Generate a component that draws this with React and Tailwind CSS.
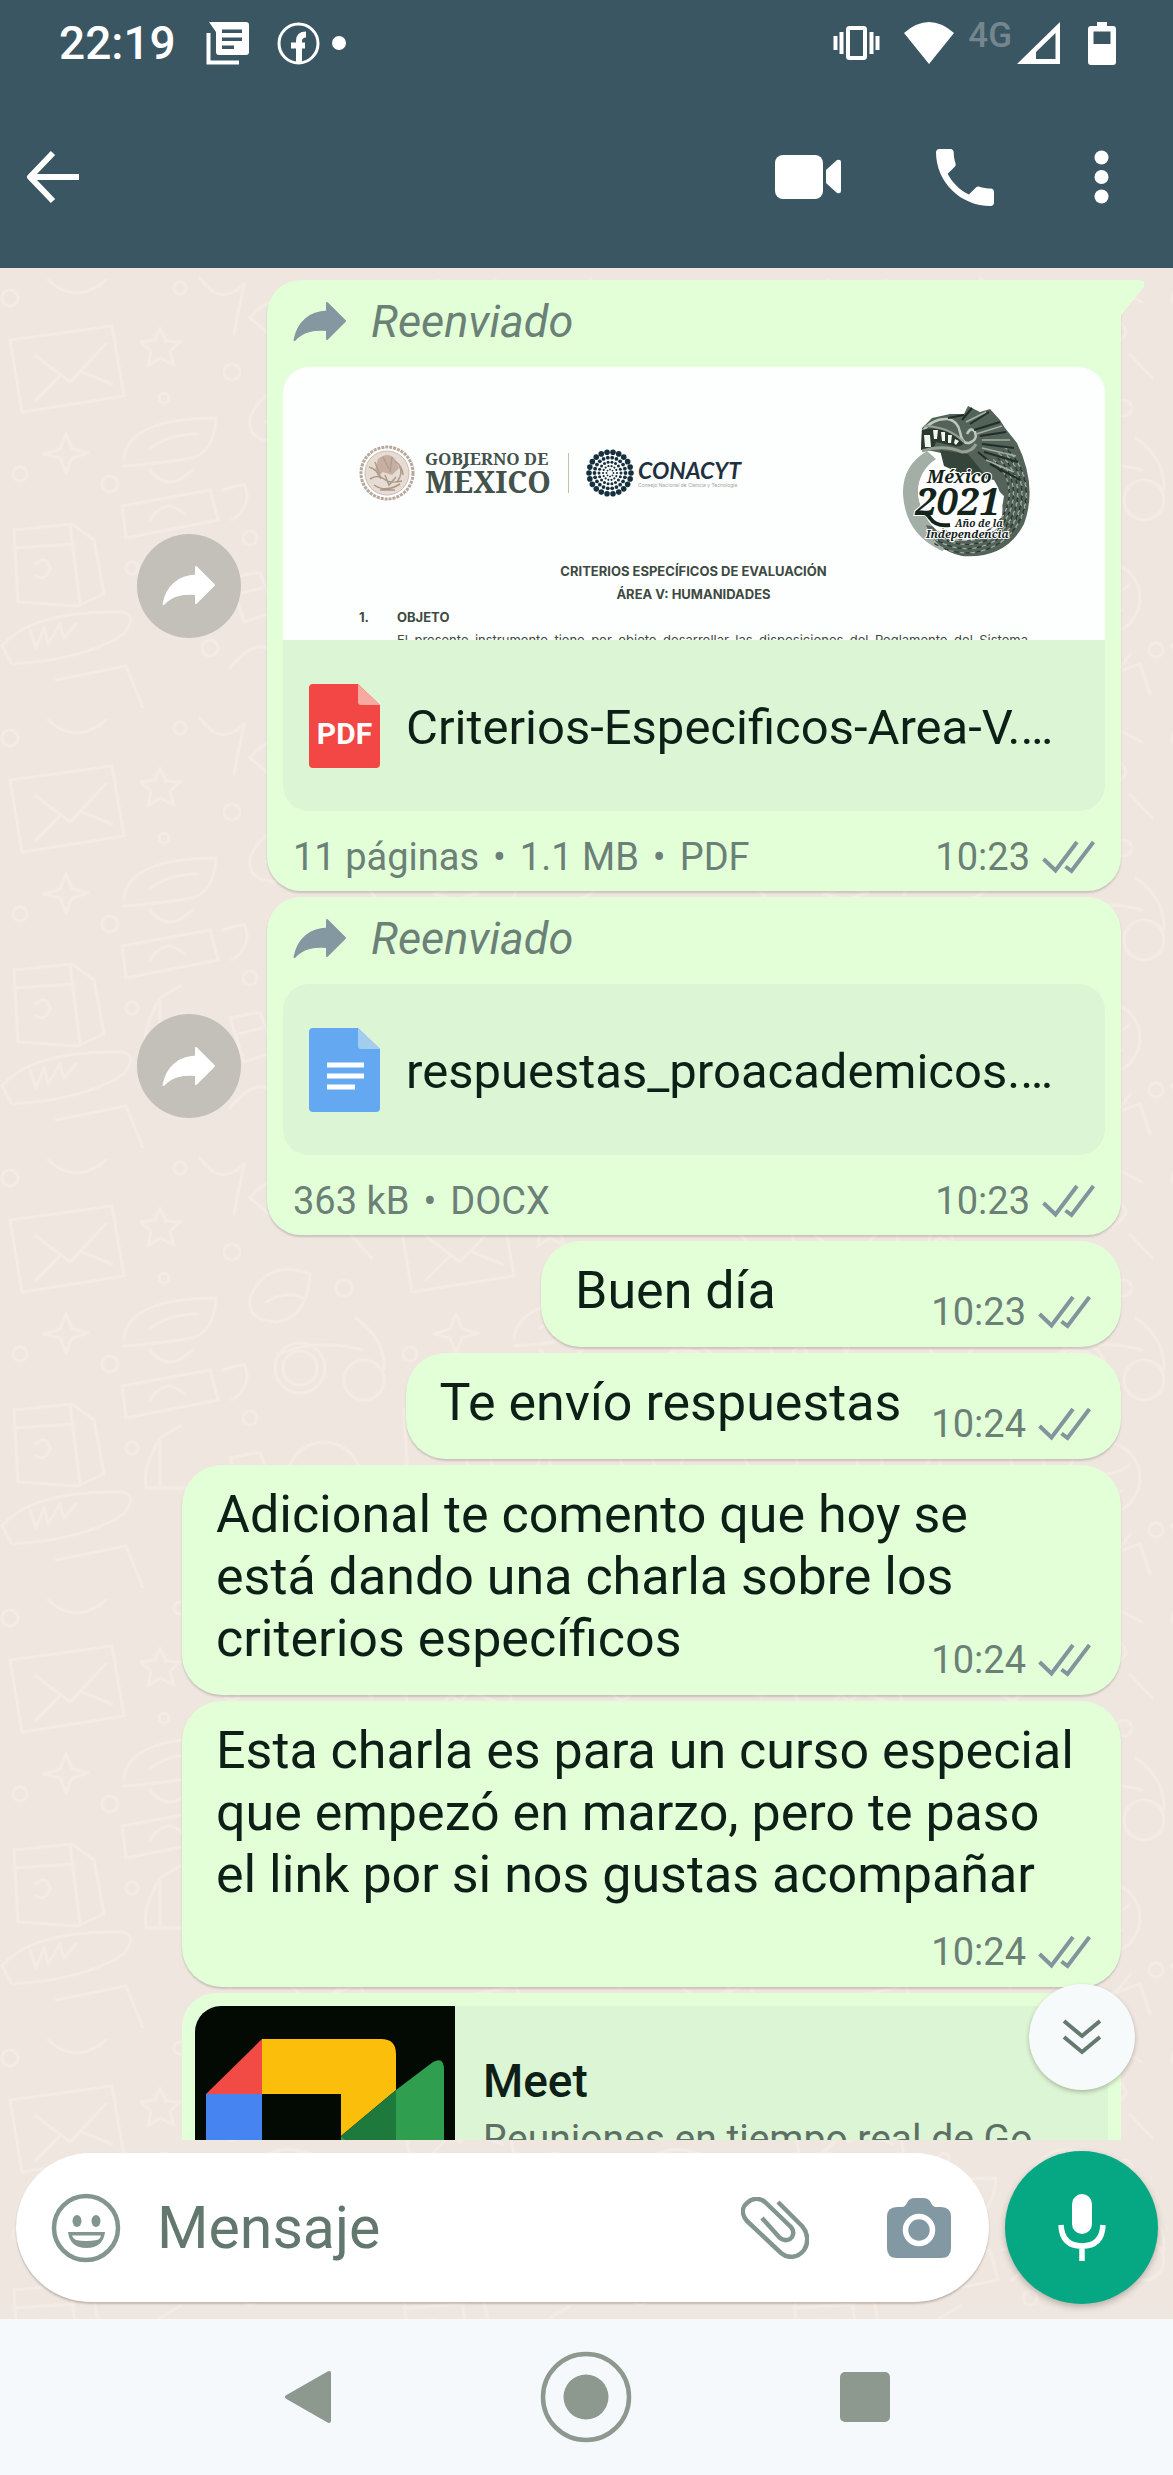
import React from 'react';

const messages = [
  { id: 1, type: 'file', kind: 'pdf', name: 'Criterios-Especificos-Area-V.…', info: ['11 páginas', '1.1 MB', 'PDF'], time: '10:23', preview: true, tail: true },
  { id: 2, type: 'file', kind: 'docx', name: 'respuestas_proacademicos.…', info: ['363 kB', 'DOCX'], time: '10:23' },
  { id: 3, type: 'text', text: 'Buen día', time: '10:23', width: 'min-w-[580px]' },
  { id: 4, type: 'text', text: 'Te envío respuestas', time: '10:24' },
  { id: 5, type: 'text', text: 'Adicional te comento que hoy se\nestá dando una charla sobre los\ncriterios específicos', time: '10:24', width: 'w-[939px]' },
  { id: 6, type: 'text', text: 'Esta charla es para un curso especial\nque empezó en marzo, pero te paso\nel link por si nos gustas acompañar', time: '10:24', width: 'w-[939px]', stacked: true },
];

function ForwardArrow({ className }) {
  return (
    <svg className={className} viewBox="0 0 54 41" fill="currentColor" stroke="currentColor" strokeWidth="2" strokeLinejoin="round" aria-hidden="true">
      <path d="M34 2 52 20 34 38V29C20 28 10 30 1.500 39 5 21 17 11 34 10.500z" />
    </svg>
  );
}

function Ticks() {
  return (
    <svg className="h-[34px] w-[53px] text-[#82959c]" viewBox="0 0 53 34" fill="none" stroke="currentColor" strokeWidth="4" aria-label="Entregado">
      <path d="M1.500 19 13.500 30.500 35 2M23.500 26.500 29.500 31 51.500 2" />
    </svg>
  );
}

function Meta({ time }) {
  return (
    <span className="flex items-center gap-3 text-[38px] leading-[44px] text-[#6b8077]">
      <time>{time}</time>
      <Ticks />
    </span>
  );
}

function StatusBar() {
  return (
    <div className="flex h-[86px] items-center pl-[59px] pr-[57px]">
      <span className="text-[46px] font-medium leading-none">22:19</span>
      <svg className="ml-[30px] h-[43px] w-[43px]" viewBox="0 0 43 43" aria-hidden="true">
        <path d="M2.500 11V40.500H33" fill="none" stroke="currentColor" strokeWidth="4" />
        <path fill="currentColor" fillRule="evenodd" d="M3 0H40Q43 0 43 3V30Q43 33 40 33H13Q10 33 10 30V10zM16 7.500V11H36V7.500zM16 15.500V19H36V15.500zM16 23.500V27H28V23.500z" />
      </svg>
      <svg className="ml-7 h-[43px] w-[43px]" viewBox="0 0 43 43" fill="none" stroke="currentColor" aria-hidden="true">
        <circle cx="21.500" cy="21.500" r="19.500" strokeWidth="3" />
        <path d="M22 41V19Q22 12.500 29 12.500M14 23.500H28" strokeWidth="6" />
      </svg>
      <span className="ml-3 h-[14px] w-[14px] rounded-full bg-white" />

      <svg className="ml-auto h-[34px] w-[47px]" viewBox="0 0 47 34" fill="none" stroke="currentColor" aria-hidden="true">
        <rect x="15" y="2" width="17" height="30" rx="1.500" strokeWidth="4" />
        <path d="M2.500 10V24M8.500 6V28M38.500 6V28M44.500 10V24" strokeWidth="4" />
      </svg>
      <svg className="ml-6 h-[42px] w-[50px]" viewBox="0 0 50 42" fill="currentColor" aria-hidden="true">
        <path d="M0 11Q25-11 50 11L25 42z" />
      </svg>
      <span className="-mt-4 ml-[14px] text-[35px] font-medium leading-none text-[#74878f]">4G</span>
      <svg className="ml-[5px] h-[42px] w-[43px]" viewBox="0 0 43 42" fill="currentColor" fillRule="evenodd" aria-hidden="true">
        <path d="M43 0V42H0zM38.500 11 19 30V37H38.500z" />
      </svg>
      <svg className="ml-7 h-[43px] w-[28px]" viewBox="0 0 28 43" fill="currentColor" fillRule="evenodd" aria-hidden="true">
        <path d="M9 0H19V4H25Q28 4 28 7V40Q28 43 25 43H3Q0 43 0 40V7Q0 4 3 4H9zM5.500 9.500V22H22.500V9.500z" />
      </svg>
    </div>
  );
}

function Header() {
  return (
    <header className="shrink-0 bg-[#3a5663] text-white">
      <StatusBar />
      <div className="flex h-[182px] items-center pl-[26px] pr-16">
        <button type="button" aria-label="Atrás">
          <svg className="block h-[54px] w-[54px]" viewBox="0 0 54 54" fill="none" stroke="currentColor" strokeWidth="6" strokeLinejoin="round">
            <path d="M27 3 4 27 27 51M4 27H53" />
          </svg>
        </button>
        <button type="button" aria-label="Videollamada" className="ml-auto">
          <svg className="block h-[44px] w-[67px]" viewBox="0 0 67 44" fill="currentColor">
            <rect width="48" height="44" rx="8" />
            <path d="M51 15 62 5Q66 4 66 7V36Q66 39 62 38L51 28z" />
          </svg>
        </button>
        <button type="button" aria-label="Llamar" className="ml-[94px]">
          <svg className="block h-[57px] w-[58px]" viewBox="3 3 18 18" preserveAspectRatio="none" fill="currentColor">
            <path d="M20 15.500c-1.250 0-2.450-.2-3.570-.57-.35-.12-.75-.03-1.020.24l-2.200 2.200c-2.830-1.440-5.150-3.750-6.590-6.590l2.200-2.200c.28-.28.36-.67.250-1.020C8.700 6.450 8.500 5.250 8.500 4c0-.55-.45-1-1-1H4c-.55 0-1 .45-1 1 0 9.390 7.610 17 17 17 .55 0 1-.45 1-1v-3.500c0-.55-.45-1-1-1z" />
          </svg>
        </button>
        <button type="button" aria-label="Más opciones" className="ml-[100px]">
          <svg className="block h-[54px] w-[15px]" viewBox="0 0 15 54" fill="currentColor">
            <circle cx="7.500" cy="7.500" r="7" />
            <circle cx="7.500" cy="27" r="7" />
            <circle cx="7.500" cy="46.500" r="7" />
          </svg>
        </button>
      </div>
    </header>
  );
}

// Tapiz con dibujitos tenues detrás de la conversación
function Wallpaper() {
  return (
    <svg className="absolute inset-0 h-full w-full" aria-hidden="true">
      <defs>
        <pattern id="doodles" width="390" height="440" patternUnits="userSpaceOnUse">
          <g fill="none" stroke="#f4ebe5" strokeWidth="3" strokeLinejoin="round" strokeLinecap="round">
            <path d="M10 72 112 58 124 128 22 144zM36 88l34 26 36-38M36 132l24-24M112 116 82 104" />
            <path d="M160 60l6 13 14 1-10 9 4 14-14-7-12 8 3-15-10-9 14-2z" />
            <path d="M124 190q6-40 92-40-2 34-24 40-36 6-68 8M150 180q20-14 48-14M150 202q18 24 42 0" />
            <path d="M250 150q16-40 60-24-2 44-34 48-30-2-26-24zM266 154q20-12 38-4" />
            <circle cx="300" cy="220" r="25" />
            <circle cx="300" cy="220" r="17" />
            <circle cx="364" cy="232" r="20" />
            <path d="M278 206q40-16 84-4M384 222q2-30-28-52" />
            <path d="M14 262l58-6 22 16 10 54-26 12-60-4zM70 256l10 80M14 280l60-4M36 296q10-10 14 4-4 14-14 8" />
            <path d="M122 238l88-16 8 30-92 18zM222 222l22-6q10 20-12 36M150 252q16-24 34-6" />
            <path d="M160 290v50h-14q-4-20 14-50l20-12M160 340h34" />
            <path d="M2 378q30-36 120-34 16 2 2 22-40 26-112 30zM30 362l6 18 8-20 4 16 12-20 4 14 12-14" />
            <path d="M56 412l70-14 18 44M230 310l30-6 14 40-30 10zM238 326l24-6" />
            <circle cx="324" cy="330" r="36" />
            <path d="M300 318q24 16 48 0M308 344q16 14 34-2" />
            <path d="M250 50q24-30 60-14t36 30q-20 26-56 18zM336 20l26 14M350 86l22 24" />
            <path d="M48 12q28 26 58 0M200 10q20 30 44 6l-10 50" />
            <path d="M230 400q30-40 60-4t60-10M320 410l40-14 10 30" />
            <path d="M66 166l6 15 16 4-16 5-6 15-6-15-16-4 16-5z" />
            <circle cx="20" cy="206" r="7" />
            <circle cx="110" cy="216" r="8" />
            <circle cx="232" cy="104" r="8" />
            <circle cx="164" cy="130" r="5" />
            <circle cx="344" cy="140" r="8" />
            <circle cx="250" cy="270" r="7" />
            <circle cx="132" cy="300" r="6" />
            <circle cx="210" cy="380" r="8" />
            <circle cx="180" cy="20" r="6" />
            <circle cx="376" cy="382" r="7" />
            <circle cx="10" cy="30" r="8" />
          </g>
        </pattern>
      </defs>
      <rect width="100%" height="100%" fill="url(#doodles)" />
    </svg>
  );
}

function ConacytDots() {
  const rings = [
    { r: 21, n: 22, size: 2.8 },
    { r: 15.5, n: 22, size: 1.9 },
    { r: 11, n: 18, size: 1.5 },
    { r: 7, n: 14, size: 1.1 },
    { r: 3.5, n: 8, size: 0.9 },
  ];
  return (
    <svg className="h-12 w-12" viewBox="-24 -24 48 48" fill="#17303f" aria-hidden="true">
      {rings.map((ring) =>
        Array.from({ length: ring.n }, (_, i) => {
          const a = (i / ring.n) * Math.PI * 2;
          return <circle key={`${ring.r}-${i}`} cx={Math.cos(a) * ring.r} cy={Math.sin(a) * ring.r} r={ring.size} />;
        })
      )}
    </svg>
  );
}

function EagleSeal() {
  return (
    <svg className="h-14 w-14" viewBox="0 0 56 56" fill="none" aria-hidden="true">
      <circle cx="28" cy="28" r="26" stroke="#b9a79b" strokeWidth="3" strokeDasharray="3 1" />
      <circle cx="28" cy="28" r="22" fill="#e6dcd3" stroke="#cbbdb1" />
      <path d="M19 14q10-8 17 0l4 9-7 7-9-3-5 4-3-6z" fill="#c6aea1" />
      <path d="M10 22q8 2 12 12M16 17l5 14M36 16q8 6 8 14M40 20q5 8-2 17M24 12l6 12M33 12l-2 15" stroke="#b39b8c" strokeWidth="1.500" />
      <path d="M11 34q8-5 14 0t18 2M15 40q12 8 26-1M21 45h15M26 30l4 10 7-8" stroke="#aa9888" strokeWidth="1.500" />
    </svg>
  );
}

function SerpentSeal() {
  // plumas del cuerpo, repartidas a lo largo del aro
  const feathers = [];
  for (let ring = 0; ring < 5; ring++) {
    for (let i = 0; i < 34; i++) {
      const a = -0.9 + i * 0.09 + (ring % 2) * 0.05;
      const r = 43 + ring * 4.2;
      feathers.push({ x: 65 + Math.cos(a) * r, y: 87 + Math.sin(a) * r, a, light: (i + ring) % 2 === 0, key: `${ring}-${i}` });
    }
  }
  return (
    <svg className="h-[154px] w-[130px]" viewBox="0 0 130 154" aria-label="México 2021, Año de la Independencia">
      <path d="M25 45Q0 60 1 88 3 128 40 145L52 136Q17 114 16 86 17 64 34 53z" fill="#a3aea6" />
      <path d="M30 45 62 52 102 90Q99 124 60 127L24 119Q34 145 60 150 104 153 122 118 136 80 115 37L103 22 98 14 88 3 78 6 66 0 62 8 48 8 30 12 20 22 19 44z" fill="#53635a" />
      <path d="M36 52Q15 66 16 88 20 118 48 134 86 138 97 122 106 96 92 74L62 70z" fill="#fff" />
      {feathers.map((f) => (
        <path
          key={f.key}
          d={`M${f.x} ${f.y}q${-Math.sin(f.a) * 2 - 2} ${Math.cos(f.a) * 2} ${-Math.sin(f.a) * 4} ${Math.cos(f.a) * 5}`}
          fill="none"
          stroke={f.light ? '#a2ada4' : '#26352d'}
          strokeWidth="1.200"
        />
      ))}
      <path d="M38 44 66 48 84 70 60 68 42 60z" fill="#35453c" />
      <path d="M20 26Q30 12 46 13 56 15 58 26 60 38 67 37 76 34 73 26 69 20 65 28" fill="none" stroke="#bfc8be" strokeWidth="2.500" />
      <path d="M20 24Q42 18 62 37 58 42 52 40L34 36 31 44 19 44z" fill="#2a3930" />
      <path d="M22 29h6l1 12h-6zM31 24h5l-1 9h-3zM39 26h4v9h-3zM46 29h4l-1 8h-3zM53 33l4 2-3 4-2-2z" fill="#f4f6f0" />
      <path d="M20 45Q42 38 60 46 70 46 74 38" fill="none" stroke="#98a094" strokeWidth="3" />
      <path d="M22 20Q32 20 44 24 54 28 62 36" fill="none" stroke="#98a094" strokeWidth="2" />
      <path d="M46 12l16-3M60 14l10-12M68 18 87 6M72 24 98 16M78 30 104 26M80 38 112 42M82 46 116 56M76 46 100 66M88 58 118 74" fill="none" stroke="#202e27" strokeWidth="2" />
      <path d="M64 16 84 6M74 28 100 20M80 34 108 34M80 42 114 50M84 54 112 66" fill="none" stroke="#a4aea4" strokeWidth="1.500" />
      <g fontFamily="'Noto Serif', 'Liberation Serif', serif" fontStyle="italic" fontWeight="700" fill="#12241b" stroke="#fff" strokeWidth="2" paintOrder="stroke">
        <text x="25" y="77" fontSize="18">México</text>
        <text x="13" y="109" fontSize="38">2021</text>
        <text x="53" y="121" fontSize="10">Año de la</text>
        <text x="24" y="132" fontSize="11">Independencia</text>
      </g>
      <path d="M16 107Q24 105 28 112 34 121 48 119" fill="none" stroke="#12241b" strokeWidth="4" />
    </svg>
  );
}

function DocumentPreview() {
  return (
    <div className="h-[273px] overflow-hidden bg-[#fdfffe] pl-[76px] pr-[77px] pt-[39px] font-[Inter,sans-serif] text-[13px] font-bold leading-[23px] text-[#3d4a42]">
      <div className="-mr-1 flex items-start justify-between">
        <div className="flex items-center pt-[39px]">
          <EagleSeal />
          <div className="ml-[10px] w-[126px] whitespace-nowrap font-['Noto_Serif','Liberation_Serif',serif] text-[#43524a]">
            <p className="text-[17px] leading-[18px]">GOBIERNO DE</p>
            <p className="text-[30px] leading-[28px]">MÉXICO</p>
          </div>
          <span className="mx-[17px] h-10 w-px bg-[#c9bfae]" />
          <ConacytDots />
          <div className="ml-1">
            <p className="font-[Lato,sans-serif] text-[23px] italic leading-[24px] text-[#1f3140]">CONACYT</p>
            <p className="text-[5px] font-normal leading-[6px] text-[#9aa29d]">Consejo Nacional de Ciencia y Tecnología</p>
          </div>
        </div>
        <SerpentSeal />
      </div>
      <p className="text-center">CRITERIOS ESPECÍFICOS DE EVALUACIÓN</p>
      <p className="text-center">ÁREA V: HUMANIDADES</p>
      <div className="flex">
        <span className="w-[38px]">1.</span>
        <div className="flex-1">
          <p>OBJETO</p>
          <p className="whitespace-nowrap text-justify font-normal [text-align-last:justify]">
            El presente instrumento tiene por objeto desarrollar las disposiciones del Reglamento del Sistema
          </p>
        </div>
      </div>
    </div>
  );
}

function FileIcon({ kind }) {
  const isPdf = kind === 'pdf';
  return (
    <svg className="h-[84px] w-[71px] shrink-0" viewBox="0 0 71 84" aria-hidden="true">
      <path d="M4 0H49L71 21V80Q71 84 67 84H4Q0 84 0 80V4Q0 0 4 0z" fill={isPdf ? '#f24744' : '#64a8f2'} />
      <path d="M49 0 71 21H52Q49 21 49 18z" fill={isPdf ? '#f6aaa0' : '#a3cdee'} />
      {isPdf ? (
        <text x="35.500" y="60" textAnchor="middle" fontFamily="Roboto, sans-serif" fontWeight="700" fontSize="30" fill="#fff">PDF</text>
      ) : (
        <path d="M18 37H55M18 48H55M18 59H46" stroke="#fff" strokeWidth="5" />
      )}
    </svg>
  );
}

function FileMessage({ message }) {
  return (
    <div className="flex items-center gap-[26px]">
      <button type="button" aria-label="Reenviar" className="flex h-[104px] w-[104px] items-center justify-center rounded-full bg-[#c3c0b9] text-white">
        <ForwardArrow className="h-[41px] w-[54px]" />
      </button>
      <article className="relative w-[854px] rounded-[34px] bg-[#e3ffd8] px-4 shadow-[0_2px_2px_rgba(60,50,40,0.2)]">
        {message.tail && (
          <svg className="absolute -right-6 top-0 h-9 w-[60px] text-[#e3ffd8]" viewBox="0 0 60 36" fill="currentColor" aria-hidden="true">
            <path d="M0 0H54Q62 1 58 8L36 35H0z" />
          </svg>
        )}
        <div className="relative flex h-[87px] items-center gap-6 pb-[5px] pl-[10px] text-[45px] italic leading-none text-[#6b8077]">
          <ForwardArrow className="h-[41px] w-[54px] text-[#8398a1]" />
          <span>Reenviado</span>
        </div>
        <div className="overflow-hidden rounded-[26px] bg-[#dcf5d4]">
          {message.preview && <DocumentPreview />}
          <a href="#archivo" className="flex h-[171px] items-center gap-[26px] px-[26px]">
            <FileIcon kind={message.kind} />
            <span className="whitespace-nowrap pt-1 text-[49px] leading-[60px] text-[#0d1f17]">{message.name}</span>
          </a>
        </div>
        <footer className="flex h-[80px] items-center justify-between px-[10px] pt-3">
          <span className="flex text-[38px] leading-[44px] text-[#6b8077]">
            {message.info.map((part, i) => (
              <span key={part}>
                {i > 0 && <span className="px-[14px]">•</span>}
                {part}
              </span>
            ))}
          </span>
          <Meta time={message.time} />
        </footer>
      </article>
    </div>
  );
}

function TextMessage({ message }) {
  return (
    <article className={`flow-root max-w-full rounded-[40px] bg-[#e3ffd8] pb-[13px] pl-[34px] pr-[30px] pt-[19px] shadow-[0_2px_2px_rgba(60,50,40,0.2)] ${message.width || ''}`}>
      <span className="whitespace-pre-line text-[52px] leading-[62px] text-[#0d1f17]">{message.text}</span>
      <span className={`float-right pl-[30px] ${message.stacked ? 'mt-6' : 'mt-[30px]'}`}>
        <Meta time={message.time} />
      </span>
    </article>
  );
}

function MeetLogo() {
  return (
    <svg className="h-[260px] w-[260px] shrink-0" viewBox="0 0 260 260" aria-hidden="true">
      <rect width="260" height="260" fill="#030a04" />
      <path d="M11 88 67 33V88z" fill="#f24b45" />
      <path d="M67 33H186Q201 33 201 48V84L146 130V88H67z" fill="#fbbf0b" />
      <path d="M11 88H67V228H26Q11 228 11 213z" fill="#4684f2" />
      <path d="M146 130 201 84V176z" fill="#1d7a3c" />
      <path d="M201 84 238 56Q249 50 249 64V196Q249 210 238 204L201 176z" fill="#2f9e4e" />
      <path d="M67 172H146V130L201 176V213Q201 228 186 228H67z" fill="#2f9e4e" />
    </svg>
  );
}

function LinkMessage() {
  return (
    <article className="w-[939px] max-w-full rounded-t-[34px] bg-[#e3ffd8] p-[13px]">
      <a href="#meet" className="flex overflow-hidden rounded-[26px] bg-[#dcf5d4]">
        <MeetLogo />
        <span className="flex flex-col gap-[6px] whitespace-nowrap pl-7 pt-[48px]">
          <strong className="text-[46px] font-medium leading-[54px] text-[#0d1f17]">Meet</strong>
          <span className="text-[39px] leading-[50px] text-[#5c7066]">Reuniones en tiempo real de Go…</span>
        </span>
      </a>
    </article>
  );
}

function Composer() {
  return (
    <form className="relative flex shrink-0 items-center gap-4 pb-[15px] pl-4 pr-[15px] pt-[11px]" onSubmit={(e) => e.preventDefault()}>
      <div className="flex h-[149px] min-w-0 flex-1 items-center rounded-full bg-white pl-[35px] pr-[38px] shadow-[0_2px_2px_rgba(60,50,40,0.25)]">
        <button type="button" aria-label="Emojis">
          <svg className="block h-[70px] w-[70px]" viewBox="0 0 70 70" fill="none">
            <circle cx="35" cy="35" r="32" stroke="#82968f" strokeWidth="4.500" />
            <ellipse cx="26" cy="28" rx="4.500" ry="6" fill="#82968f" />
            <ellipse cx="45" cy="28" rx="4.500" ry="6" fill="#82968f" />
            <path d="M17 39H54Q52 55 35.500 55 19 55 17 39z" fill="#82968f" />
            <path d="M21 42.500H50Q49 46.500 46 47 35 49 25 47 22 46 21 42.500z" fill="#fff" />
          </svg>
        </button>
        <input
          type="text"
          aria-label="Mensaje"
          placeholder="Mensaje"
          className="ml-9 min-w-0 flex-1 bg-transparent text-[59px] leading-[70px] text-[#0d1f17] outline-none placeholder:text-[#62776d]"
        />
        <button type="button" aria-label="Adjuntar">
          <svg className="block h-[62px] w-[68px]" viewBox="0 0 68 62" fill="none" stroke="#82968f" strokeWidth="4.500" strokeLinecap="butt" strokeLinejoin="round">
            <path d="M37 5 61 29C67 36 68 46 63 53 57 61 47 62 40 56L6 24C1 18 0 11 6 6 11 1 19 0 25 6L50 30C54 35 52 40 49 42 45 44 41 43 38 40L21 21" />
          </svg>
        </button>
        <button type="button" aria-label="Cámara" className="ml-[78px]">
          <svg className="block h-[60px] w-[64px]" viewBox="0 0 64 60">
            <path d="M10 9H15Q18 9 20 5 22 0 28 0H36Q42 0 44 5 46 9 49 9H54Q64 9 64 19V50Q64 60 54 60H10Q0 60 0 50V19Q0 9 10 9z" fill="#8299a3" />
            <circle cx="32" cy="32" r="13.500" fill="none" stroke="#fff" strokeWidth="5.500" />
          </svg>
        </button>
      </div>
      <button type="button" aria-label="Grabar nota de voz" className="flex h-[153px] w-[153px] items-center justify-center rounded-full bg-[#06a884] shadow-[0_3px_6px_rgba(60,50,40,0.3)]">
        <svg className="h-[67px] w-[48px]" viewBox="0 0 48 67" fill="none" stroke="#fff" strokeWidth="5.500">
          <rect x="14" y="0" width="20" height="40" rx="10" fill="#fff" stroke="none" />
          <path d="M3 31Q4 52 24 52 44 52 45 31M24 52V67" />
        </svg>
      </button>
    </form>
  );
}

function NavigationBar() {
  return (
    <nav className="flex h-[156px] shrink-0 items-center justify-center gap-[208px] bg-[#f5f9fb] text-[#8d988f]">
      <button type="button" aria-label="Volver">
        <svg className="block h-[54px] w-[48px]" viewBox="0 0 48 54" fill="currentColor" stroke="currentColor" strokeWidth="4" strokeLinejoin="round">
          <path d="M3 27 45 3V51z" />
        </svg>
      </button>
      <button type="button" aria-label="Inicio">
        <svg className="block h-[92px] w-[92px]" viewBox="0 0 92 92">
          <circle cx="46" cy="46" r="43" fill="none" stroke="currentColor" strokeWidth="4.500" />
          <circle cx="46" cy="46" r="22.500" fill="currentColor" />
        </svg>
      </button>
      <button type="button" aria-label="Recientes">
        <span className="block h-[50px] w-[50px] rounded-[5px] bg-[#8d988f]" />
      </button>
    </nav>
  );
}

export default function App() {
  return (
    <div className="flex h-screen flex-col overflow-hidden font-[Roboto,sans-serif]">
      <Header />
      <div className="relative flex min-h-0 flex-1 flex-col bg-[#efe6e0]">
        <Wallpaper />
        <main className="relative min-h-0 flex-1 overflow-hidden">
          <div className="flex flex-col items-end gap-[6px] pr-[52px] pt-3">
            {messages.map((message) =>
              message.type === 'file' ? (
                <FileMessage key={message.id} message={message} />
              ) : (
                <TextMessage key={message.id} message={message} />
              )
            )}
            <LinkMessage />
          </div>
        </main>
        <Composer />
        <button
          type="button"
          aria-label="Ir al final"
          className="absolute bottom-[229px] right-[38px] flex h-[106px] w-[106px] items-center justify-center rounded-full bg-[#f7fafa] shadow-[0_2px_4px_rgba(60,50,40,0.3)]"
        >
          <svg className="h-[36px] w-[40px]" viewBox="0 0 40 36" fill="none" stroke="#66796f" strokeWidth="4">
            <path d="M2 2 20 17 38 2M2 18 20 33 38 18" />
          </svg>
        </button>
      </div>
      <NavigationBar />
    </div>
  );
}
